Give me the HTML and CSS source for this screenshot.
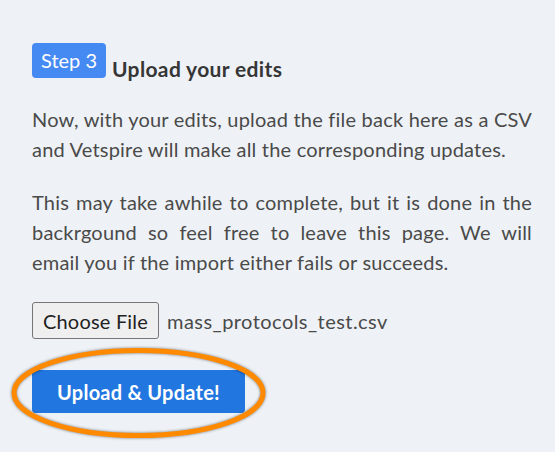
FILE: index.html
```html
<!doctype html>
<html lang="en">
<head>
<meta charset="UTF-8">
<title>Upload your edits</title>
<link rel="stylesheet" href="styles.css">
</head>
<body>
	<div class="step">
		<div class="step_head">
			<span class="badge">Step 3</span>
			<span class="step_title">Upload your edits</span>
		</div>
		<p class="txt">Now, with your edits, upload the file back here as a CSV and Vetspire will make all the corresponding updates.</p>
		<p class="txt">This may take awhile to complete, but it is done in the backrgound so feel free to leave this page. We will email you if the import either fails or succeeds.</p>
		<div class="file_row">
			<button class="bt_file">Choose File</button>
			<span class="file_name">mass_protocols_test.csv</span>
		</div>
		<div class="upload_wrap">
			<button class="bt_upload">Upload &amp; Update!</button>
			<svg class="circle" width="257" height="92" viewBox="0 0 257 92">
				<ellipse cx="128.5" cy="46" rx="124.5" ry="42.5" fill="none" stroke="#ff8a00" stroke-width="5"/>
			</svg>
		</div>
	</div>
</body>
</html>
```
FILE: styles.css
```css
body{
	margin:0;
	background:#eef2f6;
	font-family:"Lato","Noto Sans",sans-serif;
	color:#4a4a4a;
}
.step{
	width:500px;
	padding:43px 23px 39px 32px;
}
.step_head{
	display:flex;
	align-items:flex-end;
	gap:6px;
}
.badge{
	display:block;
	height:35px;
	line-height:35px;
	padding:0 9px;
	background:#4589f2;
	color:#fff;
	font-size:20px;
	border-radius:4px;
}
.step_title{
	font-size:21px;
	font-weight:bold;
	color:#363636;
	letter-spacing:0.35px;
	line-height:24px;
	margin-bottom:-3px;
}
.txt{
	margin:26px 0 0 0;
	font-size:20px;
	line-height:30px;
	letter-spacing:0.2px;
	text-align:justify;
}
.txt + .txt{
	margin-top:23px;
}
.file_row{
	display:flex;
	align-items:center;
	gap:8px;
	margin-top:25px;
}
.bt_file{
	width:127px;
	height:37px;
	padding:0;
	background:#efefef;
	border:1px solid #767676;
	border-radius:3px;
	font-family:inherit;
	font-size:20px;
	letter-spacing:0.2px;
	color:#222;
}
.file_name{
	font-size:20px;
	letter-spacing:0.45px;
}
.upload_wrap{
	position:relative;
	width:213px;
	margin-top:31px;
}
.bt_upload{
	display:block;
	width:213px;
	height:43px;
	padding:0;
	background:#2176e0;
	color:#fff;
	border:none;
	border-radius:4px;
	font-family:inherit;
	font-size:20px;
	font-weight:bold;
	letter-spacing:0.25px;
}
.circle{
	position:absolute;
	left:-22px;
	top:-23px;
	overflow:visible;
	filter:drop-shadow(0 0 1.5px rgba(0,0,0,.5));
}
```
